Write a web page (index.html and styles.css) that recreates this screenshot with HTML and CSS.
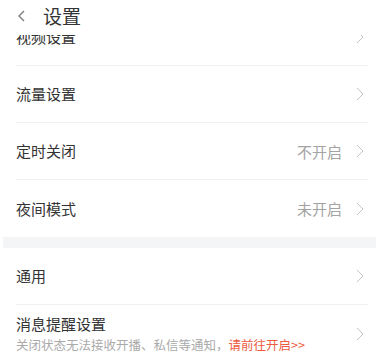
FILE: index.html
```html
<!DOCTYPE html>
<html lang="zh-CN">
<head>
  <meta charset="UTF-8" />
  <meta name="viewport" content="width=device-width, initial-scale=1.0"/>
  <title>设置</title>
  <link rel="stylesheet" href="styles.css">
</head>
<body>
  <div class="topbar">
    <svg class="back" width="9" height="12" viewBox="0 0 9 12">
      <path d="M7 1 L2 6 L7 11" fill="none" stroke="#777" stroke-width="1.3"/>
    </svg>
    <span class="title">设置</span>
  </div>

  <div class="list">
    <div class="item">
      <span class="label">视频设置</span>
      <svg class="arrow" width="8" height="14" viewBox="0 0 8 14"><path d="M1 1 L7 7 L1 13" fill="none" stroke="#c4c4c4" stroke-width="1"/></svg>
    </div>
    <div class="item">
      <span class="label">流量设置</span>
      <svg class="arrow" width="8" height="14" viewBox="0 0 8 14"><path d="M1 1 L7 7 L1 13" fill="none" stroke="#c4c4c4" stroke-width="1"/></svg>
    </div>
    <div class="item">
      <span class="label">定时关闭</span>
      <span class="value">不开启</span>
      <svg class="arrow" width="8" height="14" viewBox="0 0 8 14"><path d="M1 1 L7 7 L1 13" fill="none" stroke="#c4c4c4" stroke-width="1"/></svg>
    </div>
    <div class="item last">
      <span class="label">夜间模式</span>
      <span class="value">未开启</span>
      <svg class="arrow" width="8" height="14" viewBox="0 0 8 14"><path d="M1 1 L7 7 L1 13" fill="none" stroke="#c4c4c4" stroke-width="1"/></svg>
    </div>
  </div>

  <div class="gap"></div>

  <div class="list">
    <div class="item">
      <span class="label">通用</span>
      <svg class="arrow" width="8" height="14" viewBox="0 0 8 14"><path d="M1 1 L7 7 L1 13" fill="none" stroke="#c4c4c4" stroke-width="1"/></svg>
    </div>
    <div class="item last tall">
      <div class="text">
        <div class="label">消息提醒设置</div>
        <div class="sub">关闭状态无法接收开播、私信等通知，<span class="link">请前往开启&gt;&gt;</span></div>
      </div>
      <svg class="arrow" width="8" height="14" viewBox="0 0 8 14"><path d="M1 1 L7 7 L1 13" fill="none" stroke="#c4c4c4" stroke-width="1"/></svg>
    </div>
  </div>
</body>
</html>
```

FILE: styles.css
```css
body {
  margin: 0;
  background: #fff;
  font-family: "Noto Sans CJK SC", "Noto Sans", sans-serif;
  color: #333;
  overflow: hidden;
}

.topbar {
  position: fixed;
  top: 0; left: 0;
  width: 100%;
  height: 35px;
  background: #fff;
  z-index: 2;
  display: flex;
  align-items: flex-start;
  padding-top: 4px;
  box-sizing: border-box;
}

.back {
  margin: 6px 0 0 17px;
}

.title {
  margin-left: 17px;
  font-size: 19px;
  line-height: 24px;
  color: #333;
}

.topbar + .list {
  padding-top: 9px;
}

.item {
  display: flex;
  align-items: center;
  height: 57px;
  margin: 0 11px 0 16px;
  padding-right: 4px;
  border-bottom: 1px solid #f2f2f2;
  box-sizing: border-box;
}

.item.last {
  border-bottom: none;
}

.item.tall {
  height: auto;
  padding-top: 9px;
  padding-bottom: 8px;
}

.label {
  font-size: 15px;
  line-height: 20px;
  color: #333;
  flex: 1;
}

.text {
  flex: 1;
}

.sub {
  font-size: 12.5px;
  line-height: 18px;
  margin-top: 2px;
  color: #aaa;
  white-space: nowrap;
}

.link {
  color: #ec5a3f;
}

.value {
  font-size: 15px;
  color: #a3a3a3;
  margin-right: 14px;
}

.arrow {
  flex: none;
}

.gap {
  height: 11px;
  margin: 0 3px;
  background: #f3f5f6;
}
```
